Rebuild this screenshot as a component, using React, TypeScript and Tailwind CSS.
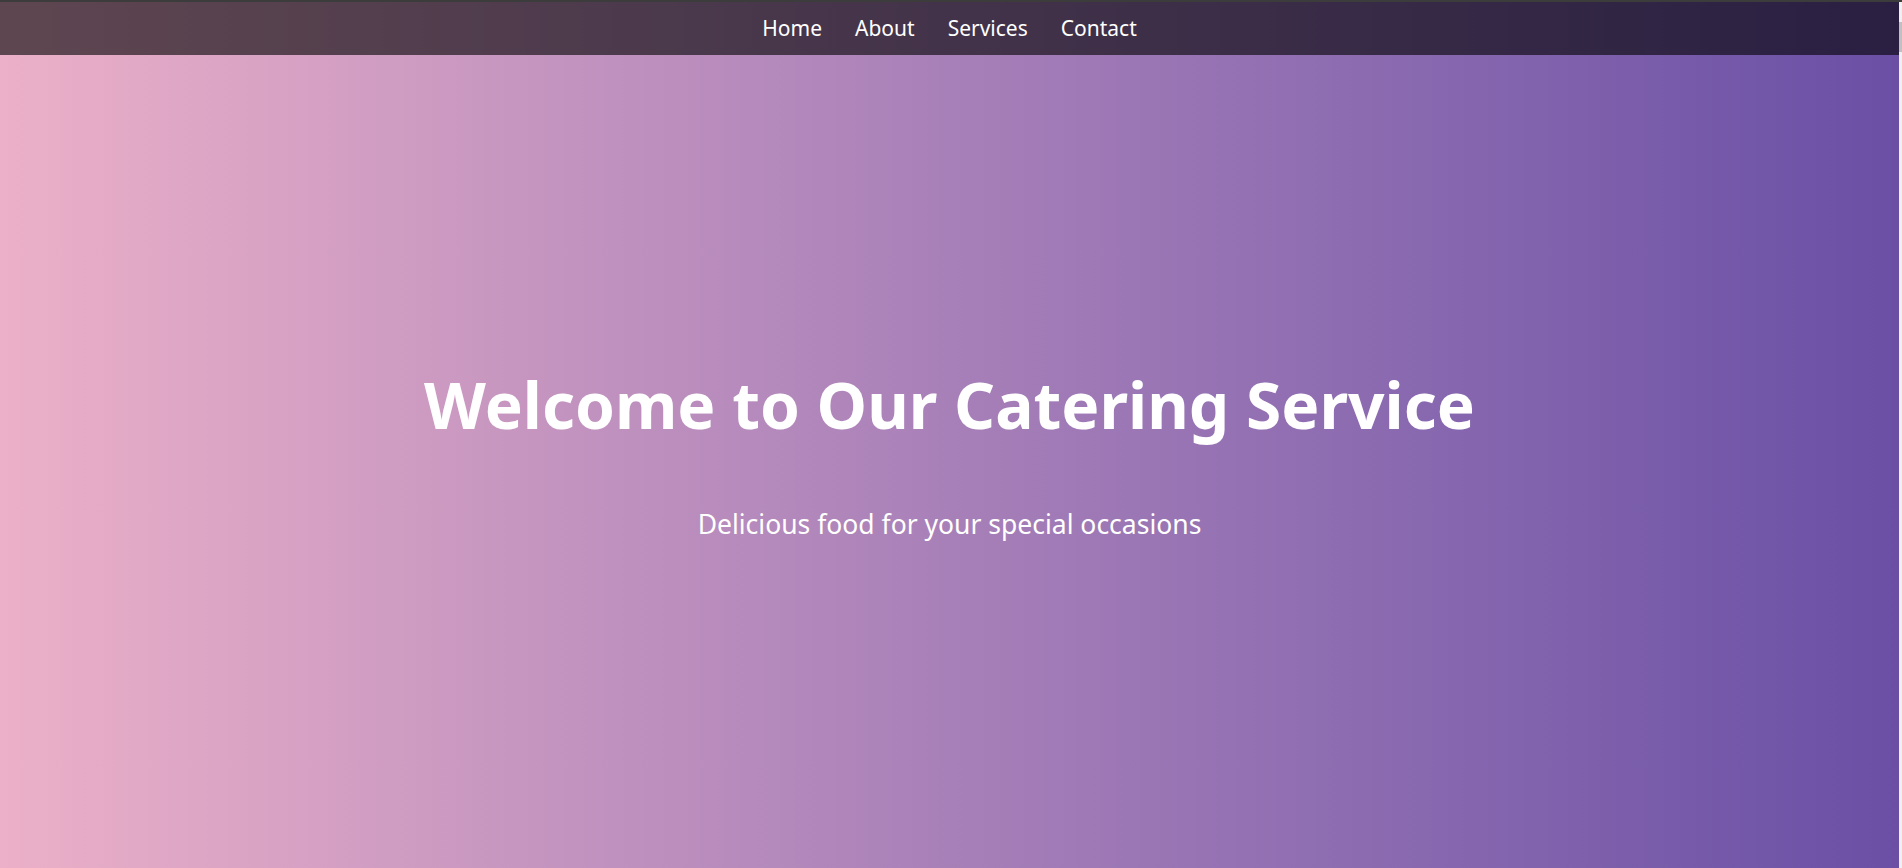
export default function App() {
  const font = { fontFamily: '"Segoe UI", "Noto Sans", "Open Sans", sans-serif' };
  return (
    <div className="w-[1902px] h-[868px] flex flex-col overflow-hidden" style={font}>
      <div className="h-[2px] bg-[#3c3c3c] shrink-0" />
      <div className="flex flex-1 min-h-0">
        <div className="flex-1 flex flex-col bg-gradient-to-r from-[#ecb0c8] to-[#6a4fa5]">
          <nav className="h-[53px] shrink-0 bg-[rgba(0,0,0,0.6)] flex items-center justify-center gap-[33px] text-white text-[21px]">
            <a>Home</a>
            <a>About</a>
            <a>Services</a>
            <a>Contact</a>
          </nav>
          <main className="flex-1 flex flex-col items-center justify-center text-white pb-[12px]">
            <h1 className="text-[64px] font-bold leading-none">Welcome to Our Catering Service</h1>
            <p className="text-[26.5px] mt-[74px] leading-none">Delicious food for your special occasions</p>
          </main>
        </div>
        <div className="w-[3px] bg-[#f0f0f0] flex flex-col">
          <div className="h-[20px]" />
          <div className="h-[30px] bg-[#c0c0c0]" />
        </div>
      </div>
    </div>
  );
}
